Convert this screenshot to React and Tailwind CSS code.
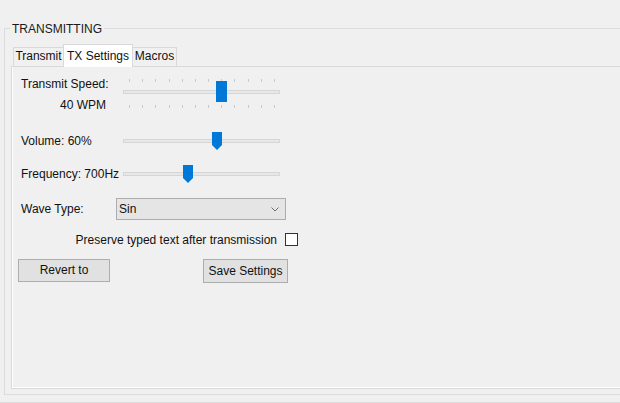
import React from "react";

const ticks = Array.from({ length: 12 }, (_, i) => i);

function TickSlider({ thumb }) {
  return (
    <div className="relative w-[157px] h-[32px]">
      <div className="absolute left-[6px] right-[5px] top-[2px] flex justify-between">
        {ticks.map((i) => (
          <div key={i} className="w-px h-[3px] bg-[#c8c8c8]" />
        ))}
      </div>
      <div className="absolute left-0 right-0 top-[13px] h-[4px] bg-[#e7e7e7] border border-[#d6d6d6]" />
      <div
        className="absolute top-[4px] w-[11px] h-[21px] bg-[#0078d7]"
        style={{ left: thumb }}
      />
      <div className="absolute left-[6px] right-[5px] top-[28px] flex justify-between">
        {ticks.map((i) => (
          <div key={i} className="w-px h-[3px] bg-[#c8c8c8]" />
        ))}
      </div>
    </div>
  );
}

function PointSlider({ thumb }) {
  return (
    <div className="relative w-[157px] h-[20px]">
      <div className="absolute left-0 right-0 top-[8px] h-[4px] bg-[#e7e7e7] border border-[#d6d6d6]" />
      <svg
        className="absolute top-[1px]"
        style={{ left: thumb }}
        width="10"
        height="18"
        viewBox="0 0 10 18"
      >
        <path d="M0 0 H10 V13 L5 18 L0 13 Z" fill="#0078d7" />
      </svg>
    </div>
  );
}

export default function App() {
  return (
    <div className="w-[620px] h-[403px] bg-[#f0f0f0] overflow-hidden border-b border-[#dcdcdc] pt-[21px] pl-[4px] font-['Liberation_Sans',Arial,sans-serif] text-[12px] text-[#111]">
      <fieldset className="w-[660px] h-[374px] border border-[#dcdcdc] bg-[#f0f0f0]">
        <legend className="ml-[5px] px-[2px] leading-[14px] text-[#1a1a1a]">
          <span className="inline-block translate-y-[1px]">TRANSMITTING</span>
        </legend>
        <div className="mt-[9px] ml-[8px] flex items-end h-[22px] leading-[16px]">
          <div className="w-[50px] h-[19px] border border-r-0 border-b-0 border-[#d9d9d9] flex items-end justify-center pb-[2px]">
            Transmit
          </div>
          <div className="relative z-10 -mb-px w-[70px] h-[23px] bg-white border border-b-0 border-[#d9d9d9] flex items-end justify-center pb-[3px]">
            TX Settings
          </div>
          <div className="w-[44px] h-[19px] border border-l-0 border-b-0 border-[#d9d9d9] flex items-end justify-center pb-[2px]">
            Macros
          </div>
        </div>
        <div className="ml-[6px] w-[640px] h-[323px] border border-[#d9d9d9] shadow-[inset_1px_-1px_0_#ffffff] flex flex-col pl-[9px] leading-[16px]">
          <div className="mt-[9px] flex">
            <div className="w-[102px] flex flex-col">
              <span>Transmit Speed:</span>
              <span className="mt-[5px] text-right pr-[17px]">40 WPM</span>
            </div>
            <div className="mt-[1px]">
              <TickSlider thumb={93} />
            </div>
          </div>
          <div className="mt-[18px] flex items-center h-[20px]">
            <div className="w-[102px]">Volume: 60%</div>
            <PointSlider thumb={89} />
          </div>
          <div className="mt-[13px] flex items-center h-[20px]">
            <div className="w-[102px]">Frequency: 700Hz</div>
            <PointSlider thumb={60} />
          </div>
          <div className="mt-[14px] flex items-center h-[22px]">
            <div className="w-[95px]">Wave Type:</div>
            <div className="w-[170px] h-[22px] bg-[#e5e5e5] border border-[#adadad] flex items-center justify-between pl-[2px] pr-[6px]">
              <span>Sin</span>
              <svg width="8" height="5" viewBox="0 0 8 5">
                <polyline
                  points="0.5,0.5 4,4 7.5,0.5"
                  fill="none"
                  stroke="#707070"
                  strokeWidth="1"
                />
              </svg>
            </div>
          </div>
          <div className="mt-[13px] w-[277px] flex items-center justify-end gap-[8px] h-[13px]">
            <span>Preserve typed text after transmission</span>
            <div className="w-[13px] h-[13px] bg-white border border-[#333333]" />
          </div>
          <div className="mt-[13px] -ml-[3px] flex">
            <div className="w-[92px] h-[23px] bg-[#e1e1e1] border border-[#adadad] flex items-center justify-center pb-[1px]">
              Revert to
            </div>
            <div className="ml-[93px] w-[85px] h-[24px] bg-[#e1e1e1] border border-[#adadad] flex items-center justify-center">
              Save Settings
            </div>
          </div>
        </div>
      </fieldset>
    </div>
  );
}
